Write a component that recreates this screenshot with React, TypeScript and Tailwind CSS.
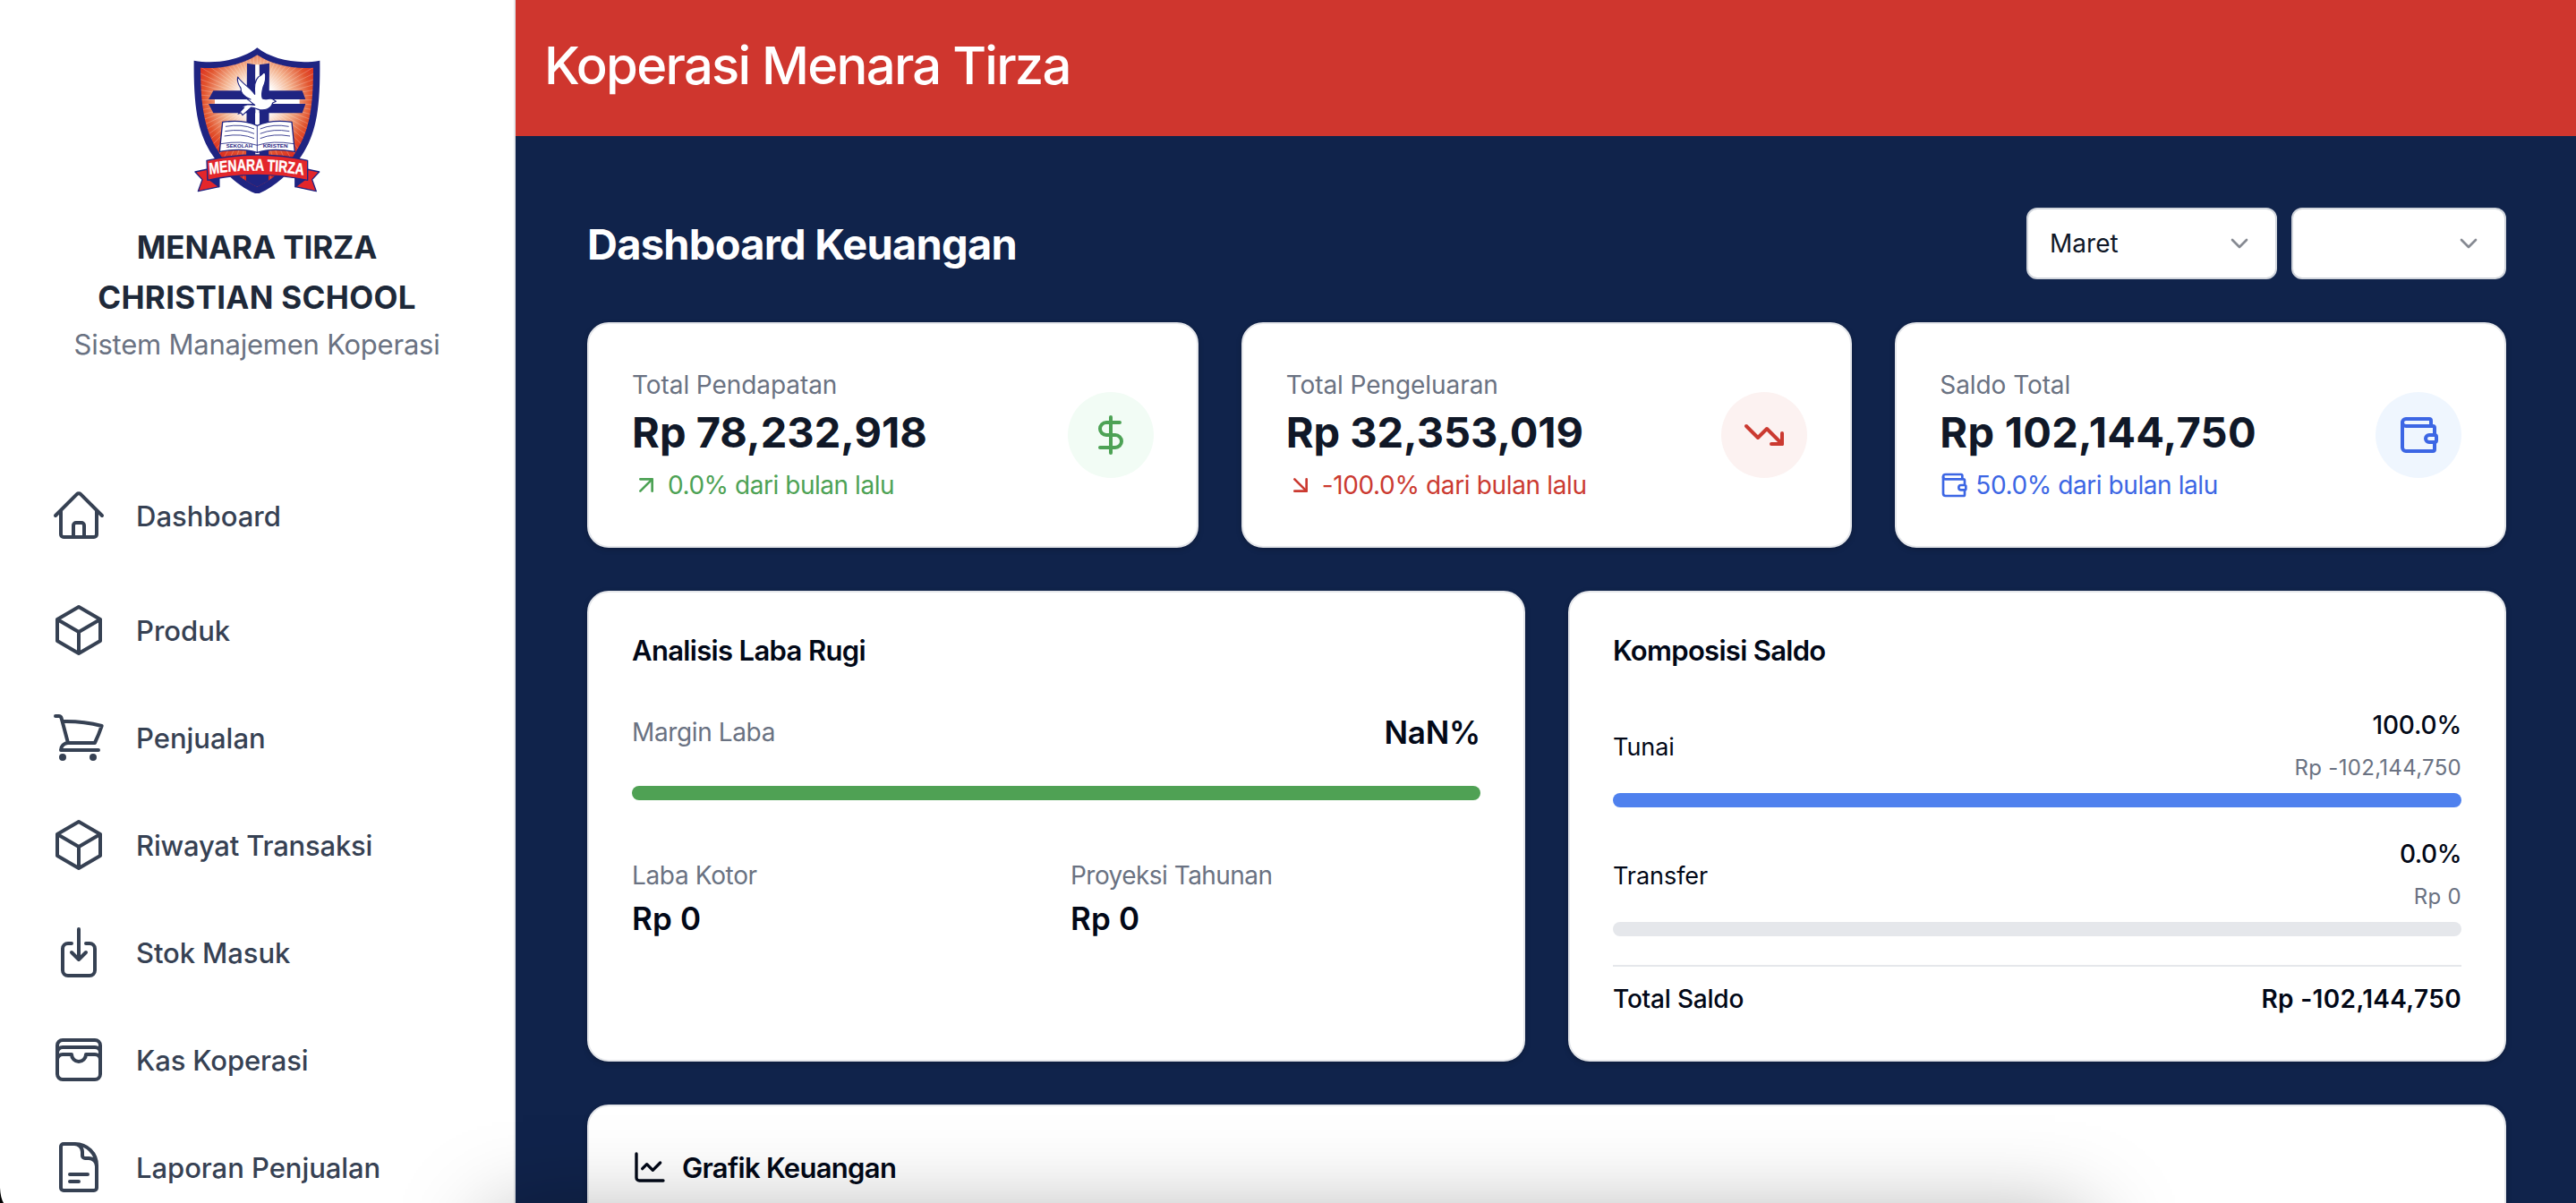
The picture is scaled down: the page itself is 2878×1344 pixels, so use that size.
import type { ReactNode } from 'react';
import {
  ArrowDownRight,
  ArrowUpRight,
  ChartLine,
  ChevronDown,
  DollarSign,
  TrendingDown,
  Wallet,
} from 'lucide-react';
import {
  HiOutlineArrowDownOnSquare,
  HiOutlineCube,
  HiOutlineDocumentText,
  HiOutlineHome,
  HiOutlineShoppingCart,
  HiOutlineWallet,
} from 'react-icons/hi2';

const rays = Array.from({ length: 72 }, (_, i) => {
  const a = (i * 5 * Math.PI) / 180;
  return `M${292 + 60 * Math.cos(a)} ${215 + 60 * Math.sin(a)}L${292 + 330 * Math.cos(a)} ${215 + 330 * Math.sin(a)}`;
}).join('');

function SchoolLogo() {
  return (
    <svg className="h-[190px] w-[194px]" viewBox="0 0 582 570" role="img" aria-label="Menara Tirza">
      <defs>
        <radialGradient id="glow" gradientUnits="userSpaceOnUse" cx="292" cy="215" r="225">
          <stop offset="0.25" stopColor="#ffffff" />
          <stop offset="0.52" stopColor="#f4b592" />
          <stop offset="0.8" stopColor="#e2552f" />
          <stop offset="1" stopColor="#dc2a1e" />
        </radialGradient>
        <clipPath id="inner">
          <path d="M292 64C246 96 170 113 102 107C102 240 118 320 160 385C190 440 235 480 292 506C349 480 394 440 424 385C466 320 480 240 480 107C414 113 338 96 292 64Z" />
        </clipPath>
        <path id="ribbonLine" d="M174 465Q384 436 604 470" />
      </defs>
      <path
        fill="#1f2482"
        d="M292 40C244 78 160 97 80 83C78 250 96 330 142 400C182 462 230 504 285 528H299C354 504 402 462 442 400C488 330 504 250 502 83C424 97 340 78 292 40Z"
      />
      <g clipPath="url(#inner)">
        <rect x="90" y="50" width="410" height="470" fill="url(#glow)" />
        <path d={rays} stroke="#ffffff" strokeWidth="2" opacity="0.35" />
        <path fill="#1f2482" d="M255 440H330V520H255Z" />
      </g>
      <path fill="#1f2482" d="M258 92L286 97V440H255ZM299 97L333 92L330 440H299Z" />
      <path fill="#ffffff" d="M286 97H299V440H286ZM150 213H434V228H150Z" />
      <path fill="#1f2482" d="M145 184H443L454 213H129ZM129 228H454L443 259H145Z" />
      <path fill="#ffffff" d="M286 200H299V300H286Z" />
      <path
        fill="#ffffff"
        stroke="#1f2482"
        strokeWidth="3.5"
        strokeLinejoin="round"
        d="M270 213C248 205 236 190 237 175C230 165 224 150 227 138C240 158 262 170 276 186L284 196C282 175 283 150 296 138C306 134 312 126 317 120C325 136 318 160 312 172C308 186 306 200 310 210C322 216 330 208 342 211L355 220L344 225C338 246 318 251 300 248C290 246 280 240 272 240L243 266L238 258L228 262L248 240L234 240L260 230L284 232C274 226 262 212 250 207Z"
      />
      <path
        fill="#ffffff"
        stroke="#1f2482"
        strokeWidth="4"
        strokeLinejoin="round"
        d="M176 289C215 284 260 286 292 301C324 286 368 284 408 289L418 388C372 380 330 378 292 391C254 378 212 380 166 388Z"
      />
      <path
        fill="none"
        stroke="#1f2482"
        strokeWidth="2.5"
        d="M292 301V391M170 362Q240 350 292 367Q344 350 415 362M186 304Q240 294 282 312M184 320Q240 310 282 328M182 336Q240 326 282 344M302 312Q346 294 398 304M302 328Q346 310 400 320M302 344Q346 326 402 336"
      />
      <g fill="#1f2482" fontFamily="Liberation Sans" fontWeight="700" fontSize="16">
        <text x="188" y="376" textLength="88" lengthAdjust="spacingAndGlyphs">SEKOLAH</text>
        <text x="311" y="376" textLength="84" lengthAdjust="spacingAndGlyphs">KRISTEN</text>
      </g>
      <g stroke="#1f2482" strokeWidth="4" strokeLinejoin="round">
        <path fill="#e3262b" d="M126 447L84 456L108 482L94 521L164 506V474L126 480Z" />
        <path fill="#e3262b" d="M458 447L500 456L476 482L490 521L420 506V474L458 480Z" />
        <path fill="#1f2482" d="M126 478L164 474V506Z" />
        <path fill="#1f2482" d="M458 478L420 474V506Z" />
        <path fill="#e3262b" d="M123 418Q292 380 461 418V484Q292 448 126 484Z" />
      </g>
      <g transform="scale(0.76 1)">
        <text fill="#ffffff" stroke="#ffffff" strokeWidth="1" fontFamily="Liberation Sans" fontWeight="700" fontSize="55">
          <textPath href="#ribbonLine">MENARA TIRZA</textPath>
        </text>
      </g>
    </svg>
  );
}

const navItems = [
  { label: 'Dashboard', icon: HiOutlineHome, text: 'tracking-[0.03px]', box: 'mb-2' },
  { label: 'Produk', icon: HiOutlineCube, text: '', box: '' },
  { label: 'Penjualan', icon: HiOutlineShoppingCart, text: '', box: '' },
  { label: 'Riwayat Transaksi', icon: HiOutlineCube, text: 'tracking-[-0.19px]', box: '' },
  { label: 'Stok Masuk', icon: HiOutlineArrowDownOnSquare, text: 'tracking-[-0.1px]', box: '' },
  { label: 'Kas Koperasi', icon: HiOutlineWallet, text: 'tracking-[-0.13px]', box: '' },
  { label: 'Laporan Penjualan', icon: HiOutlineDocumentText, text: 'tracking-[-0.05px]', box: '' },
];

function Sidebar() {
  return (
    <aside className="flex w-[576px] shrink-0 flex-col border-r-2 border-gray-200 bg-white pt-10">
      <div className="flex flex-col items-center text-center">
        <SchoolLogo />
        <h2 className="mt-[18px] text-[35px] leading-[56px] font-bold text-gray-800">
          <span className="block tracking-[-0.1px]">MENARA TIRZA</span>
          <span className="block tracking-[0.3px]">CHRISTIAN SCHOOL</span>
        </h2>
        <p className="mt-px text-[31px] leading-[48px] tracking-[-0.23px] text-gray-500">Sistem Manajemen Koperasi</p>
      </div>
      <nav className="mt-[107px] flex flex-col">
        {navItems.map(({ label, icon: Icon, text, box }) => (
          <a key={label} className={`flex h-[120px] shrink-0 items-center gap-8 pl-14 text-gray-700 ${box}`}>
            <Icon className="size-16" />
            <span className={`pt-px text-[31px] leading-[48px] font-medium ${text}`}>{label}</span>
          </a>
        ))}
      </nav>
    </aside>
  );
}

function Card({ className = '', children }: { className?: string; children: ReactNode }) {
  return (
    <section className={`rounded-[24px] border-2 border-gray-200 bg-white p-12 shadow-[0_2px_6px_rgba(0,0,0,0.2)] ${className}`}>
      {children}
    </section>
  );
}

function Stat(props: {
  label: string;
  labelClass: string;
  value: string;
  valueClass: string;
  change: string;
  changeClass: string;
  toneClass: string;
  badgeClass: string;
  smallIcon: ReactNode;
  icon: ReactNode;
}) {
  return (
    <Card className="flex items-center justify-between">
      <div>
        <p className={`text-[28px] leading-10 text-gray-500 ${props.labelClass}`}>{props.label}</p>
        <p className={`pt-px text-[47px] leading-[63px] font-bold text-gray-900 ${props.valueClass}`}>{props.value}</p>
        <div className={`mt-2 flex items-center gap-2 text-[28px] leading-10 ${props.toneClass}`}>
          {props.smallIcon}
          <span className={props.changeClass}>{props.change}</span>
        </div>
      </div>
      <div className={`flex size-24 items-center justify-center rounded-full ${props.toneClass} ${props.badgeClass}`}>
        {props.icon}
      </div>
    </Card>
  );
}

function Balance(props: {
  name: string;
  nameClass: string;
  percent: string;
  percentClass: string;
  amount: string;
  barClass: string;
}) {
  return (
    <div>
      <div className="flex items-center justify-between leading-10">
        <span className={`pt-px text-[27px] ${props.nameClass}`}>{props.name}</span>
        <div className="pb-1 text-right text-[28px]">
          <p className={`font-medium ${props.percentClass}`}>{props.percent}</p>
          <p className="mt-3 text-[24px] leading-8 tracking-[0.3px] text-gray-500">{props.amount}</p>
        </div>
      </div>
      <div className={`mt-2 h-4 rounded-full ${props.barClass}`} />
    </div>
  );
}

export default function App() {
  return (
    <div className="relative flex h-[1344px] w-full overflow-hidden bg-[#10234b] font-[Inter,sans-serif] text-[#020817]">
      <Sidebar />
      <div className="flex min-w-0 grow flex-col">
        <header className="h-[152px] shrink-0 bg-[#cf362e] px-8 pt-[37px]">
          <h1 className="text-[58px] leading-[72px] font-medium tracking-[-1.76px] text-white">Koperasi Menara Tirza</h1>
        </header>
        <main className="flex flex-col gap-12 pt-20 pr-[78px] pl-20">
          <div className="flex h-20 items-center justify-between">
            <h2 className="pt-px text-[47px] leading-[64px] font-bold tracking-[-0.76px] text-white">Dashboard Keuangan</h2>
            <div className="flex gap-4">
              <button className="flex h-20 w-[280px] items-center justify-between rounded-[12px] border-2 border-gray-300 bg-white px-6 text-[28px] leading-10 text-gray-900">
                <span className="tracking-[0.05px]">Maret</span>
                <ChevronDown className="size-8 opacity-50" />
              </button>
              <button
                aria-label="Tahun"
                className="flex h-20 w-[240px] items-center justify-end rounded-[12px] border-2 border-gray-300 bg-white px-6 text-gray-900"
              >
                <ChevronDown className="size-8 opacity-50" />
              </button>
            </div>
          </div>

          <div className="grid grid-cols-3 gap-12">
            <Stat
              label="Total Pendapatan"
              labelClass="tracking-[-0.08px]"
              value="Rp 78,232,918"
              valueClass="tracking-[0.02px]"
              change="0.0% dari bulan lalu"
              changeClass="tracking-[-0.46px]"
              toneClass="text-[#4da255]"
              badgeClass="bg-[#f2fcf5]"
              smallIcon={<ArrowUpRight className="size-8" />}
              icon={<DollarSign className="size-12" />}
            />
            <Stat
              label="Total Pengeluaran"
              labelClass="tracking-[-0.07px]"
              value="Rp 32,353,019"
              valueClass="tracking-[-0.02px]"
              change="-100.0% dari bulan lalu"
              changeClass="tracking-[-0.36px]"
              toneClass="text-[#cb3a31]"
              badgeClass="bg-[#fcf2f1]"
              smallIcon={<ArrowDownRight className="size-8" />}
              icon={<TrendingDown className="size-12" />}
            />
            <Stat
              label="Saldo Total"
              labelClass="tracking-[-0.08px]"
              value="Rp 102,144,750"
              valueClass="tracking-[0.25px]"
              change="50.0% dari bulan lalu"
              changeClass="tracking-[-0.42px]"
              toneClass="text-[#3c66e4]"
              badgeClass="bg-[#eff6fe]"
              smallIcon={<Wallet className="size-8" />}
              icon={<Wallet className="size-12" />}
            />
          </div>

          <div className="grid grid-cols-2 gap-12">
            <Card>
              <h3 className="pt-px text-[31px] leading-[31px] font-semibold tracking-[-0.66px]">Analisis Laba Rugi</h3>
              <div className="mt-12 flex items-center justify-between">
                <span className="text-[28px] leading-10 tracking-[-0.38px] text-gray-500">Margin Laba</span>
                <span className="text-[35px] leading-[56px] font-semibold tracking-[-0.2px]">NaN%</span>
              </div>
              <div className="mt-8 h-4 rounded-full bg-[#4fa154]" />
              <div className="mt-16 grid grid-cols-2 gap-8">
                <div>
                  <p className="text-[28px] leading-10 tracking-[-0.35px] text-gray-500">Laba Kotor</p>
                  <p className="text-[35px] leading-[56px] font-semibold tracking-[0.2px]">Rp 0</p>
                </div>
                <div>
                  <p className="text-[28px] leading-10 tracking-[-0.54px] text-gray-500">Proyeksi Tahunan</p>
                  <p className="text-[35px] leading-[56px] font-semibold tracking-[0.2px]">Rp 0</p>
                </div>
              </div>
            </Card>
            <Card>
              <h3 className="pt-px text-[31px] leading-[31px] font-semibold tracking-[-0.7px]">Komposisi Saldo</h3>
              <div className="mt-12 flex flex-col gap-8">
                <Balance
                  name="Tunai"
                  nameClass="tracking-[-0.05px]"
                  percent="100.0%"
                  percentClass="tracking-[-0.2px]"
                  amount="Rp -102,144,750"
                  barClass="bg-[#4f81ee]"
                />
                <Balance
                  name="Transfer"
                  nameClass="tracking-[-0.05px]"
                  percent="0.0%"
                  percentClass="tracking-[-0.5px]"
                  amount="Rp 0"
                  barClass="bg-gray-200"
                />
                <div className="flex justify-between border-t-2 border-gray-200 pt-4 text-[28px] leading-10">
                  <span className="font-medium tracking-[-0.2px]">Total Saldo</span>
                  <span className="font-semibold tracking-[0.34px]">Rp -102,144,750</span>
                </div>
              </div>
            </Card>
          </div>

          <Card className="h-[400px]">
            <div className="flex items-center gap-4">
              <ChartLine className="size-10" />
              <h3 className="pt-px text-[31px] leading-[31px] font-semibold tracking-[-0.7px]">Grafik Keuangan</h3>
            </div>
          </Card>
        </main>
      </div>

      <div className="pointer-events-none absolute top-[1362px] left-[550px] h-[300px] w-[1780px] shadow-[0_0_96px_rgba(0,0,0,0.35)]" />
      <svg className="absolute bottom-0 left-0 h-[17px] w-1" viewBox="0 0 4 17">
        <path d="M0 0Q0.5 11 4 17H0Z" fill="#000000" />
      </svg>
    </div>
  );
}
